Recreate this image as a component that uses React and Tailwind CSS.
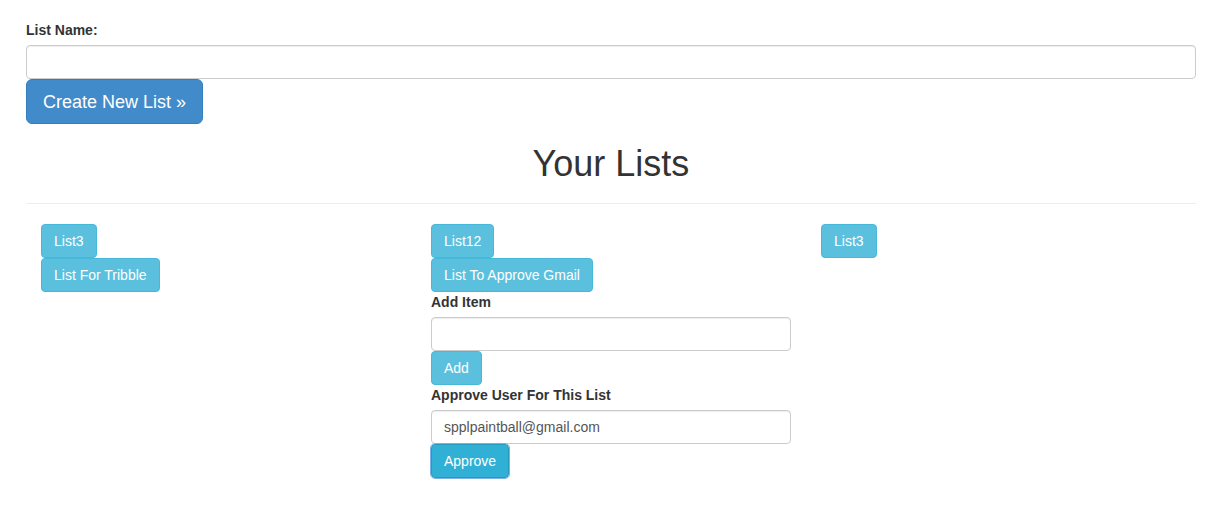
import React from 'react';

// Bootstrap 3 style list page: create form, "Your Lists" header, three columns of list buttons
const font = { fontFamily: '"Liberation Sans", Arial, sans-serif' };

function InfoButton({ children, focused }) {
    return (
        <div>
            <button
                className={
                    focused
                        ? 'h-[34px] px-3 text-[14px] leading-5 text-white rounded-[4px] border border-[#269abc] bg-[#31b0d5] outline outline-1 outline-[#7fb2e5]'
                        : 'h-[34px] px-3 text-[14px] leading-5 text-white rounded-[4px] border border-[#46b8da] bg-[#5bc0de]'
                }
            >
                {children}
            </button>
        </div>
    );
}

function Field({ value = '' }) {
    return (
        <input
            readOnly
            value={value}
            className="block w-full h-[34px] px-3 text-[14px] text-[#555] bg-white border border-[#ccc] rounded-[4px] shadow-[inset_0_1px_1px_rgba(0,0,0,0.075)] outline-none"
        />
    );
}

function Label({ children }) {
    return <div className="text-[14px] leading-5 font-bold text-[#333] mb-[5px]">{children}</div>;
}

export default function App() {
    return (
        <div className="min-h-screen bg-white text-[#333]" style={font}>
            <div className="ml-[26px] w-[1170px] pt-[20px]">
                {/* ── 새 리스트 생성 폼 ── */}
                <Label>List Name:</Label>
                <Field />
                <button className="h-[45px] px-4 text-[18px] leading-6 text-white rounded-[6px] border border-[#357ebd] bg-[#428bca]">
                    Create New List »
                </button>

                {/* ── 헤더 ── */}
                <h1 className="mt-5 mb-[10px] text-center text-[36px] leading-[39px] font-normal">Your Lists</h1>
                <hr className="mt-5 mb-5 border-0 border-t border-[#eee]" />

                {/* ── 리스트 3열 ── */}
                <div className="grid grid-cols-3">
                    <div className="px-[15px]">
                        <InfoButton>List3</InfoButton>
                        <InfoButton>List For Tribble</InfoButton>
                    </div>
                    <div className="px-[15px]">
                        <InfoButton>List12</InfoButton>
                        <InfoButton>List To Approve Gmail</InfoButton>
                        <Label>Add Item</Label>
                        <Field />
                        <InfoButton>Add</InfoButton>
                        <Label>Approve User For This List</Label>
                        <Field value="spplpaintball@gmail.com" />
                        <InfoButton focused>Approve</InfoButton>
                    </div>
                    <div className="px-[15px]">
                        <InfoButton>List3</InfoButton>
                    </div>
                </div>
            </div>
        </div>
    );
}
